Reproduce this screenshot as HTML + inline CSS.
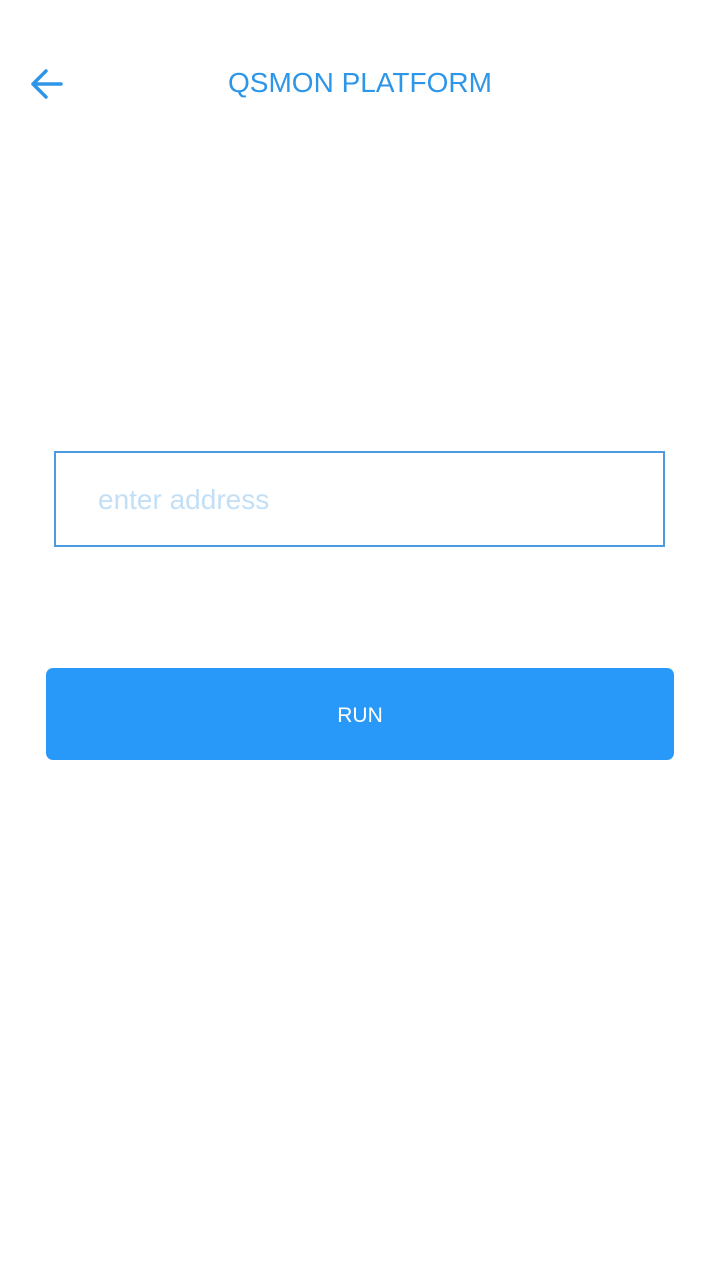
<!DOCTYPE html>
<html><head><style>
body{margin:0;width:720px;height:1280px;background:#fff;font-family:"Liberation Sans",sans-serif;position:relative;overflow:hidden}
.t{position:absolute;left:0;width:720px;top:66px;text-align:center;font-size:28px;color:#2e96e8;line-height:34px}
.in{position:absolute;left:54px;top:451px;width:607px;height:92px;border:2px solid #4a9be0}
.ph{position:absolute;left:98px;top:483px;font-size:28px;color:#c3dff6;line-height:34px}
.b{position:absolute;left:46px;top:668px;width:628px;height:92px;background:#2899f9;border-radius:7px;color:#fff;font-size:21px;text-align:center;line-height:96px}
</style></head><body>
<svg style="position:absolute;left:28px;top:66px" width="36" height="36" viewBox="0 0 36 36"><path d="M33 18H5M18 5L5 18L18 31" fill="none" stroke="#2e96e8" stroke-width="3.5" stroke-linecap="round" stroke-linejoin="round"/></svg>
<div class="t">QSMON PLATFORM</div>
<div class="in"></div>
<div class="ph">enter address</div>
<div class="b">RUN</div>
</body></html>
